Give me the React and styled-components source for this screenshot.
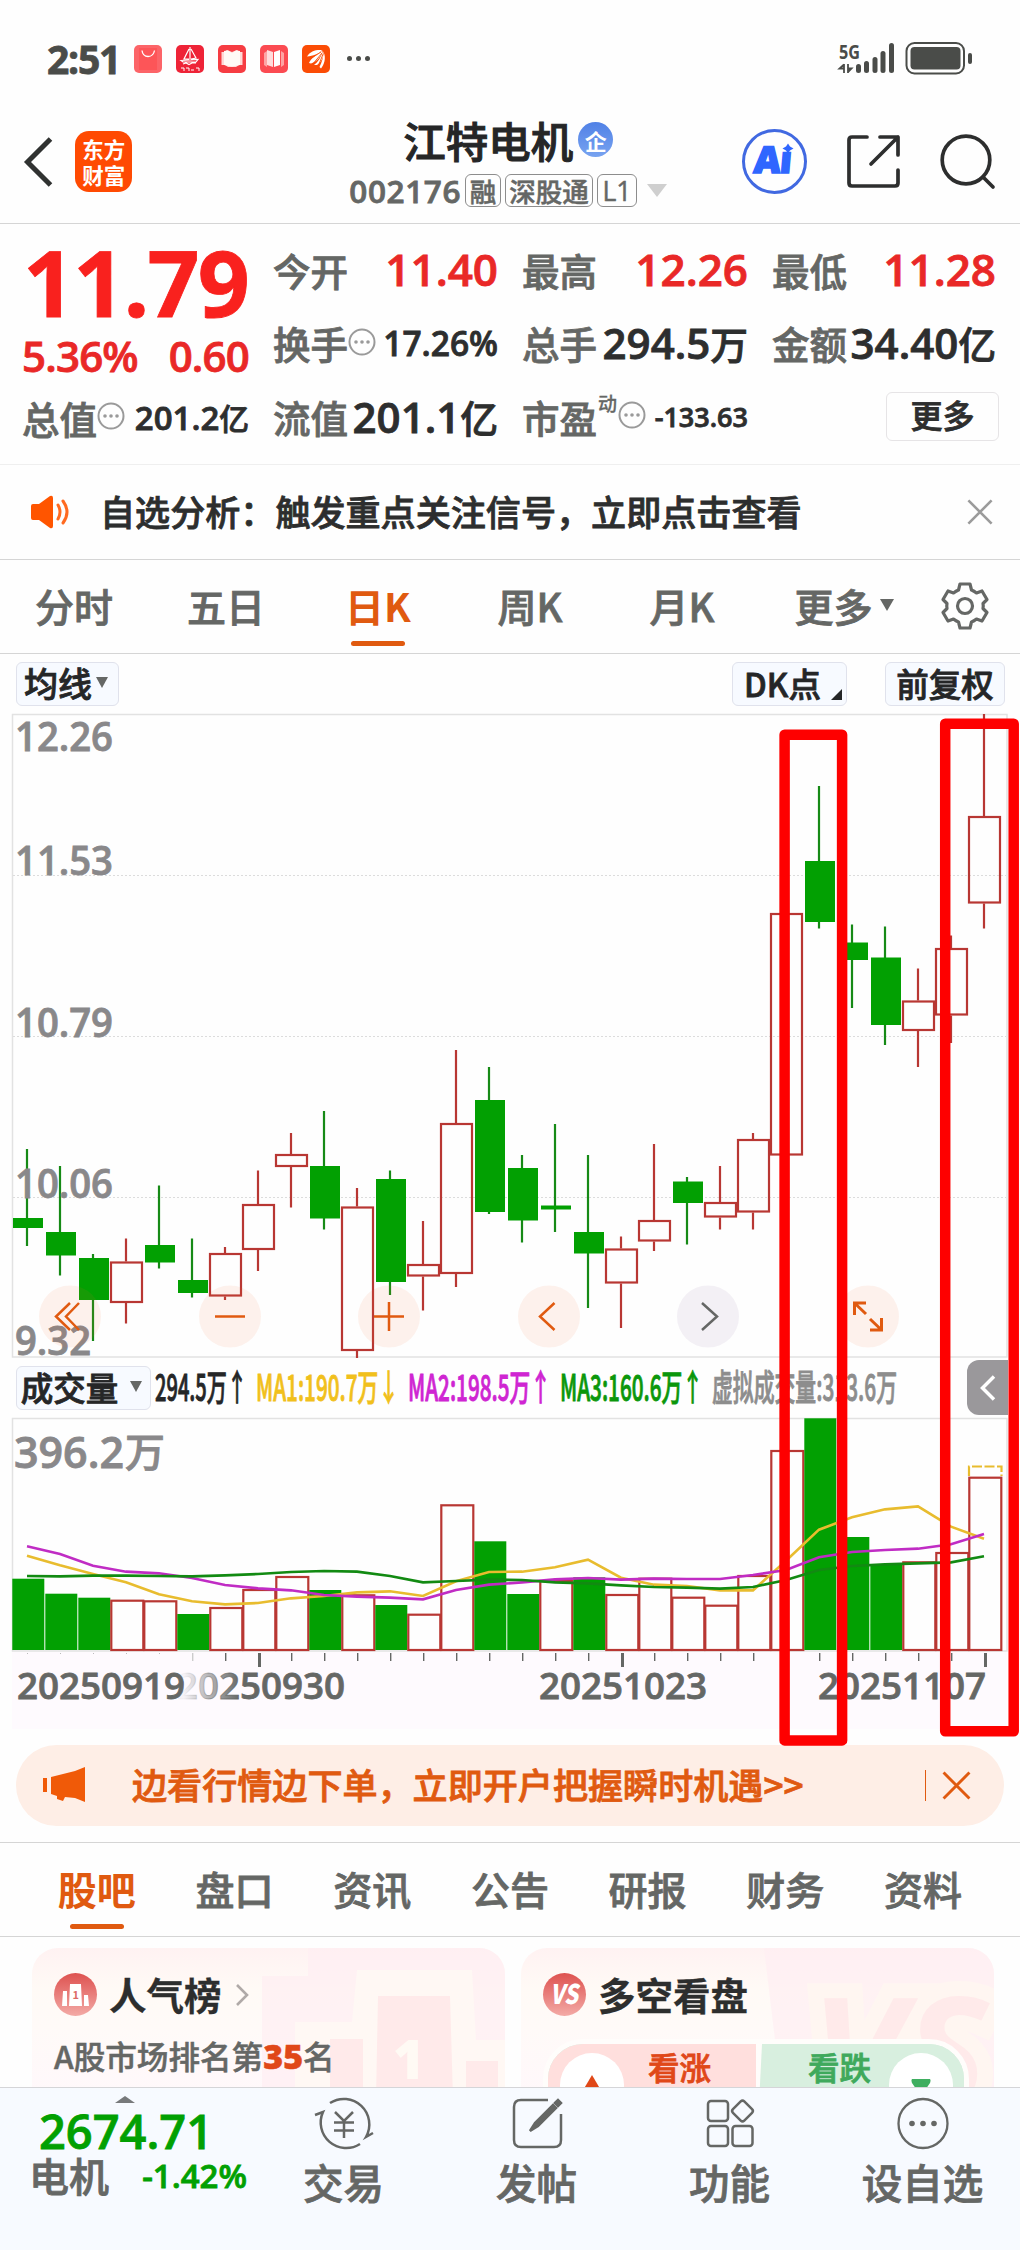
import React from 'react';
import styled, { createGlobalStyle } from 'styled-components';

const GlobalStyle = createGlobalStyle`
  * {
    box-sizing: border-box;
  }
  body {
    margin: 0;
    background: #fefefe;
    color: #2d2e2e;
    font-family: 'Open Sans', 'Noto Sans CJK SC', sans-serif;
    font-weight: 600;
    -webkit-text-stroke: 0.8px;
  }
  svg {
    display: block;
    flex: none;
    overflow: visible;
    -webkit-text-stroke: 0;
  }
`;

const RED = '#e92827';
const GREEN = '#02a002';
const ORANGE = '#e05a10';
const GREY = '#656765';
const UP = '#b83733';

const Page = styled.div`
  position: relative;
  display: flex;
  flex-direction: column;
  width: 1020px;
  height: 2250px;
  overflow: hidden;
  background: #fefefe;
`;

/* status bar */

const StatusBar = styled.div`
  display: flex;
  align-items: center;
  height: 92px;
  padding: 26px 47px 0;
  color: #4a4c49;
`;

const Clock = styled.div`
  width: 87px;
  font-size: 39px;
  font-weight: 700;
  letter-spacing: -1.2px;
  line-height: 40px;
`;

const AppIcons = styled.div`
  display: flex;
  gap: 14px;
`;

const Dots = styled.div`
  display: flex;
  gap: 4px;
  margin-left: 17px;
  i {
    width: 5px;
    height: 5px;
    border-radius: 50%;
    background: #4a4c49;
  }
`;

const Signal = styled.div`
  margin-left: auto;
`;

/* header */

const Header = styled.header`
  display: flex;
  align-items: center;
  height: 132px;
  padding: 0 24px;
  border-bottom: 1px solid #d5d5d5;
`;

const BackIcon = styled.svg`
  margin-top: 9px;
`;

const Logo = styled.div`
  display: flex;
  align-items: center;
  justify-content: center;
  width: 61px;
  height: 61px;
  margin-left: 23px;
  margin-top: 9px;
  border-radius: 14px;
  background: #ff4a02;
  color: #fff;
  font-family: 'Noto Sans CJK SC', sans-serif;
  font-size: 21.5px;
  font-weight: 700;
  line-height: 26px;
  text-align: center;
  -webkit-text-stroke: 0;
`;

const TitleBlock = styled.div`
  display: flex;
  flex-direction: column;
  width: 388px;
  margin-left: 217px;
  margin-top: 13px;
`;

const TitleRow = styled.div`
  display: flex;
  align-items: center;
  padding-left: 54px;
  height: 54px;
  font-family: 'Noto Sans CJK SC', sans-serif;
  font-size: 42.5px;
  font-weight: 500;
  color: #252627;
  -webkit-text-stroke: 1px;
`;

const Verified = styled.div`
  display: flex;
  align-items: center;
  justify-content: center;
  width: 35px;
  height: 35px;
  margin-left: 5px;
  border-radius: 50%;
  background: linear-gradient(#5081e6, #78a3f0);
  color: #fff;
  font-size: 22px;
  font-weight: 700;
  -webkit-text-stroke: 0;
`;

const CodeRow = styled.div`
  display: flex;
  align-items: center;
  height: 48px;
  color: ${GREY};
  font-size: 31.5px;
  letter-spacing: 0.6px;
`;

const Badge = styled.span`
  display: flex;
  align-items: center;
  justify-content: center;
  height: 33px;
  width: ${p => p.$w}px;
  margin-left: 4px;
  border: 1px solid #8d8d8d;
  border-radius: 6px;
  font-size: 26.5px;
  font-weight: 500;
  letter-spacing: 0;
  white-space: nowrap;
  -webkit-text-stroke: 0.5px;
`;

const HeaderIcons = styled.div`
  display: flex;
  align-items: center;
  gap: 40px;
  margin-left: 28px;
  margin-top: 9px;
`;

const Caret = styled.span`
  width: 0;
  height: 0;
  margin-left: ${p => p.$ml || 0}px;
  border-left: ${p => p.$w / 2}px solid transparent;
  border-right: ${p => p.$w / 2}px solid transparent;
  border-top: ${p => p.$h}px solid ${p => p.$color || GREY};
`;

/* quote */

const Quote = styled.section`
  display: flex;
  height: 242px;
  padding: 9px 24px 0 22px;
  border-bottom: 1px solid #efefef;
`;

const PriceColumn = styled.div`
  width: 251px;
  padding-right: 24px;
`;

const Price = styled.div`
  height: 97px;
  padding-left: 1px;
  color: #f9211e;
  font-size: 91px;
  font-weight: 700;
  line-height: 99px;
  letter-spacing: -1.8px;
`;

const Change = styled.div`
  display: flex;
  justify-content: space-between;
  align-items: center;
  height: 51px;
  color: ${RED};
  font-size: 42px;
  letter-spacing: -0.8px;
`;

const Stats = styled.div`
  display: grid;
  grid-template-columns: 225px 226px 224px;
  grid-auto-rows: 73.5px;
  column-gap: 24px;
  flex: 1;
`;

const Stat = styled.div`
  display: flex;
  align-items: center;
  height: 73.5px;
  white-space: nowrap;
`;

const StatLabel = styled.span`
  color: ${GREY};
  font-family: 'Noto Sans CJK SC', sans-serif;
  font-size: 37.5px;
  font-weight: 500;
  sup {
    display: inline-block;
    width: 20px;
    margin-left: 1px;
    font-size: 19px;
    line-height: 0;
    vertical-align: 22px;
    -webkit-text-stroke: 0.3px;
  }
`;

const StatValue = styled.span`
  margin-left: auto;
  font-size: ${p => p.$size || 42}px;
  color: ${p => p.$color || '#2d2e2e'};
`;

const Unit = styled.span`
  font-family: 'Noto Sans CJK SC', sans-serif;
  font-weight: 500;
  font-size: 0.9em;
`;

const MoreButton = styled.button`
  width: 113px;
  height: 49px;
  margin: 0 -3px 0 auto;
  padding: 0 0 4px;
  border: 1px solid #e6e4e6;
  border-radius: 6px;
  background: #fefefe;
  color: #2d2e2e;
  font-family: 'Noto Sans CJK SC', sans-serif;
  font-size: 32px;
  font-weight: 500;
  line-height: 40px;
  -webkit-text-stroke: 0.8px;
`;

/* notice + tabs */

const Notice = styled.section`
  display: flex;
  align-items: center;
  height: 95px;
  padding: 0 27px 0 30px;
  border-bottom: 1px solid #d5d5d5;
`;

const NoticeText = styled.div`
  flex: 1;
  margin-left: 29px;
  margin-top: -4px;
  color: #2d2e2e;
  font-family: 'Noto Sans CJK SC', sans-serif;
  font-size: 35.1px;
  font-weight: 500;
  white-space: nowrap;
`;

const PeriodTabs = styled.nav`
  display: flex;
  height: 94px;
  border-bottom: 1px solid #d5d5d5;
`;

const Tab = styled.div`
  position: relative;
  display: flex;
  align-items: center;
  justify-content: center;
  width: ${p => p.$w || 152}px;
  height: 100%;
  padding: 0 ${p => (p.$w ? 0 : 4)}px 3px 0;
  color: ${p => (p.$active ? ORANGE : GREY)};
  font-family: 'Noto Sans CJK SC', sans-serif;
  font-size: 39px;
  font-weight: ${p => (p.$active ? 700 : 500)};
  -webkit-text-stroke: ${p => (p.$active ? 0 : 0.8)}px;
  &::after {
    content: '';
    display: ${p => (p.$active ? 'block' : 'none')};
    position: absolute;
    bottom: 7px;
    width: 54px;
    height: 5px;
    border-radius: 3px;
    background: ${ORANGE};
  }
`;

const GearIcon = styled.svg`
  margin: 21px 0 0 12px;
`;

const Toolbar = styled.div`
  display: flex;
  align-items: center;
  height: 60px;
  padding: 0 15px 0 16px;
`;

const Chip = styled.div`
  position: relative;
  display: flex;
  align-items: center;
  justify-content: center;
  width: ${p => p.$w}px;
  height: 44px;
  margin-left: ${p => p.$ml || 0};
  padding: 0 ${p => p.$pr || 0}px 2px 0;
  border: 1px solid #e0e2ec;
  border-radius: 6px;
  background: #f7faff;
  color: #252627;
  font-family: 'Noto Sans CJK SC', sans-serif;
  font-size: ${p => p.$size || 32.5}px;
  font-weight: 500;
  white-space: nowrap;
`;

const Corner = styled.span`
  position: absolute;
  right: 4px;
  bottom: 5px;
  border-left: 11px solid transparent;
  border-bottom: 11px solid #252627;
`;

const VolumeHeader = styled.div`
  display: flex;
  align-items: center;
  height: 60px;
  padding-left: 16px;
`;

const Handle = styled.div`
  display: flex;
  align-items: center;
  justify-content: center;
  width: 41px;
  height: 55px;
  margin-left: 59px;
  border-radius: 12px 0 0 12px;
  background: #9a989b;
`;

/* drawn over both charts and the row between them */
const Marks = styled.svg`
  position: absolute;
  left: 0;
  top: 714px;
  pointer-events: none;
`;

/* banner */

const Banner = styled.div`
  display: flex;
  align-items: center;
  height: 81px;
  margin: 16px 16px;
  padding: 0 33px 0 27px;
  border-radius: 41px;
  background: #feeee6;
  color: ${ORANGE};
`;

const BannerText = styled.div`
  flex: 1;
  margin-left: 46px;
  margin-top: -4px;
  font-family: 'Noto Sans CJK SC', sans-serif;
  font-size: 35.1px;
  font-weight: 500;
  white-space: nowrap;
`;

const BannerRule = styled.span`
  width: 1px;
  height: 31px;
  margin-right: 16px;
  background: ${ORANGE};
`;

const InfoTabs = styled.nav`
  display: flex;
  height: 95px;
  padding: 0 28px;
  border-top: 1px solid #d5d5d5;
  border-bottom: 1px solid #d5d5d5;
`;

/* cards */

const Cards = styled.section`
  display: flex;
  gap: 16px;
  height: 151px;
  padding: 11px 26px 0 32px;
  overflow: hidden;
`;

const Card = styled.div`
  position: relative;
  width: 473px;
  height: 180px;
  padding: 24px 22px;
  border-radius: 26px;
  overflow: hidden;
  background: linear-gradient(#fff2f2 0, #fffaf6 40px, #fffaf8 80px, #fff8fb 150px);
`;

const Watermark = styled.svg`
  position: absolute;
  right: 0;
  top: 0;
`;

const CardTitle = styled.div`
  position: relative;
  display: flex;
  align-items: center;
  height: 46px;
  color: #2d2e2e;
  font-family: 'Noto Sans CJK SC', sans-serif;
  font-size: 37.5px;
  font-weight: 700;
  -webkit-text-stroke: 0.3px;
  svg:first-child {
    margin-right: 12px;
  }
  span {
    margin-top: -3px;
    margin-right: 13px;
  }
`;

const CardText = styled.div`
  position: relative;
  margin-top: 16px;
  color: ${GREY};
  font-family: 'Noto Sans CJK SC', sans-serif;
  font-size: 31.6px;
  font-weight: 500;
  line-height: 42px;
  -webkit-text-stroke: 0.5px;
  b {
    color: #e04818;
    font-family: 'Open Sans', sans-serif;
    font-size: 34px;
    font-weight: 800;
  }
`;

const VoteBar = styled.div`
  position: relative;
  display: flex;
  width: 426px;
  height: 90px;
  margin: 21px 0 0 0;
  border: 5px solid #fffdfb;
  border-radius: 40px;
  overflow: hidden;
  background: #d8efdf;
`;

const VoteSide = styled.div`
  display: flex;
  justify-content: space-between;
  width: ${p => p.$w}px;
  padding: ${p => p.$pad};
  background: ${p => p.$bg};
  color: ${p => p.$color};
  font-family: 'Noto Sans CJK SC', sans-serif;
  font-size: 31.5px;
  font-weight: 500;
  line-height: 44px;
`;

const VoteDot = styled.div`
  display: flex;
  justify-content: center;
  width: 64px;
  height: 64px;
  margin-top: 9px;
  padding-top: ${p => p.$pt}px;
  border-radius: 50%;
  background: #fff;
`;

/* bottom bar */

const BottomBar = styled.footer`
  display: flex;
  height: 163px;
  border-top: 1px solid #d5d5d8;
  background: #f7faff;
`;

const IndexBox = styled.div`
  width: 247px;
  padding: 8px 0 0 29px;
`;

const UpArrow = styled.svg`
  margin-left: 86px;
`;

const IndexValue = styled.div`
  padding: 3px 0 0 10px;
  color: ${GREEN};
  font-size: 47px;
  line-height: 50px;
`;

const IndexRow = styled.div`
  display: flex;
  align-items: center;
  justify-content: space-between;
  height: 38px;
  color: ${GREY};
  font-family: 'Noto Sans CJK SC', sans-serif;
  font-size: 40px;
  font-weight: 500;
  em {
    color: ${GREEN};
    font-family: 'Open Sans', sans-serif;
    font-size: 33px;
    font-style: normal;
    font-weight: 600;
  }
`;

const NavItem = styled.div`
  display: flex;
  flex-direction: column;
  align-items: center;
  width: 193px;
  padding-top: 7px;
  color: ${GREY};
  font-family: 'Noto Sans CJK SC', sans-serif;
  font-size: 40.5px;
  font-weight: 500;
  line-height: 62px;
`;

// [type, wick top, wick bottom, body top, body bottom, volume top, volume type]
const DAYS = [
  ['d', 1149, 1246, 1218, 1228, 1578.7],
  ['d', 1166, 1275.5, 1232, 1255.5, 1593.7],
  ['d', 1254, 1341, 1258, 1300, 1597.7],
  ['u', 1238.5, 1323.5, 1261.5, 1303, 1599.7],
  ['d', 1185.5, 1268.5, 1245, 1262.5, 1600.3, 'u'],
  ['d', 1238.5, 1297.5, 1280, 1293, 1614],
  ['u', 1247, 1300, 1253, 1296.5, 1607],
  ['u', 1170.5, 1271, 1204, 1250, 1589],
  ['u', 1133, 1207.5, 1154, 1167, 1576],
  ['d', 1111, 1229.5, 1166, 1218.5, 1590],
  ['u', 1188, 1358, 1206.5, 1351, 1594.3],
  ['d', 1170.5, 1295, 1179, 1282, 1605],
  ['u', 1221, 1310.5, 1264, 1276.5, 1613.7],
  ['u', 1050, 1287, 1123, 1274, 1504.3],
  ['d', 1067, 1214, 1100, 1212, 1541.3],
  ['d', 1155, 1242.5, 1168, 1220.5, 1594],
  ['d', 1124, 1232, 1205.5, 1209.5, 1580, 'u'],
  ['d', 1155, 1308, 1232, 1253.5, 1577.3],
  ['u', 1236.5, 1328, 1248.5, 1283.5, 1594],
  ['u', 1144, 1251, 1220, 1241.5, 1577.7],
  ['d', 1177, 1244.5, 1181.5, 1203, 1596.7, 'u'],
  ['u', 1166, 1229.5, 1202, 1217.5, 1604.7],
  ['u', 1133, 1229.5, 1139, 1212.5, 1575],
  ['u', 913, 1155, 913, 1155.5, 1450],
  ['d', 786, 928.5, 861, 922, 1418.3],
  ['d', 924.5, 1008, 942.5, 960, 1537],
  ['d', 926.5, 1045, 957.5, 1025, 1564.3],
  ['u', 968.5, 1067, 1000.5, 1031, 1561.3],
  ['u', 935.5, 1043, 948, 1015.5, 1552],
  ['u', 714, 928.5, 816, 903.5, 1476.7],
];

// moving averages, in thirds of a pixel from y = 1350
const MA = [
  ['#e8bc2e', [617, 646, 672, 697, 733, 754, 763, 759, 745, 738, 727, 724, 738, 694, 666, 665, 652, 629, 683, 704, 708, 721, 721, 632, 539, 502, 478, 469, 530, 566]],
  ['#c02cc4', [589, 612, 647, 665, 670, 684, 705, 715, 721, 735, 740, 743, 748, 720, 704, 697, 688, 684, 689, 686, 687, 687, 675, 660, 622, 606, 600, 596, 583, 552]],
  ['#128a12', [678, 679, 677, 677, 678, 679, 676, 672, 666, 663, 665, 678, 697, 693, 689, 690, 697, 700, 706, 711, 713, 716, 711, 690, 660, 648, 643, 640, 637, 619]],
];

const PRICES = [
  ['12.26', 751],
  ['11.53', 875],
  ['10.79', 1036.5],
  ['10.06', 1197.5],
  ['9.32', 1354.5],
];

const LEGEND = [
  ['294.5万↑', 155, 92, '#252627'],
  ['MA1:190.7万↓', 256, 143, '#f1c01c'],
  ['MA2:198.5万↑', 408, 143, '#cf25d2'],
  ['MA3:160.6万↑', 560, 143, '#0b970b'],
  ['虚拟成交量:313.6万', 712, 185, '#8d8d8d'],
];

const DATES = [
  ['20250919', 17],
  ['20250930', 177],
  ['20251023', 539],
  ['20251107', 818],
];

const BUTTONS = [70, 230, 389, 549, 708, 868];

const cx = i => 27 + 33 * i;

const Candle = ({ day, i }) => {
  const [type, hi, lo, top, bottom] = day;
  const x = cx(i);
  if (type === 'd') {
    return (
      <g fill={GREEN}>
        <rect x={x - 1.1} y={hi} width="2.2" height={lo - hi} fill="#168a16" />
        <rect x={x - 14} y={top} width="30" height={bottom - top} />
      </g>
    );
  }
  return (
    <g stroke={UP} strokeWidth="2.2" fill="none">
      <path d={`M${x} ${hi}V${top}M${x} ${bottom}V${lo}`} />
      <rect x={x - 15} y={top + 1} width="31" height={bottom - top - 2} />
    </g>
  );
};

const PriceChart = () => (
  <svg width="1020" height="644" viewBox="0 714 1020 644">
    <path d="M12.5 714.5H1007V1357H12.5Z" fill="none" stroke="#e2e2e2" strokeWidth="1.5" />
    <path d="M13 875.5H1006M13 1036.5H1006M13 1197.5H1006" stroke="#dcdcdc" strokeDasharray="2 2" />
    {DAYS.map((d, i) => <Candle key={i} day={d} i={i} />)}
    <g fill="#89888a" stroke="#89888a" strokeWidth="0.8" fontSize="39" fontWeight="600">
      {PRICES.map(([t, y]) => (
        <text key={t} x="15" y={y} textLength={t.length === 5 ? 98 : 76} lengthAdjust="spacingAndGlyphs">{t}</text>
      ))}
    </g>
    {BUTTONS.map(x => (
      <circle key={x} cx={x} cy="1316.5" r="31" fill={x === 708 ? '#8868a0' : '#f56a32'} fillOpacity="0.09" />
    ))}
    <g fill="none" stroke={ORANGE} strokeWidth="2.5">
      <path d="M70 1303L56 1316.5L70 1330M79 1303L66 1316.5L79 1330" />
      <path d="M215 1316.5H245" />
      <path d="M374 1316.5H404M389 1302V1331" />
      <path d="M554.5 1303L540 1316.5L554.5 1330" />
      <path d="M702 1303L717 1316.5L702 1330" stroke={GREY} />
      <path d="M866 1303H854.5V1315M855 1303.5L866 1314M870 1330H881.5V1318M881 1329.5L870 1319" strokeWidth="3" />
    </g>
  </svg>
);

const VolumeChart = () => (
  <svg width="1020" height="311" viewBox="0 1418 1020 311">
    <defs>
      <linearGradient id="fade" gradientUnits="userSpaceOnUse" x1="184" x2="240" y1="0" y2="0">
        <stop offset="0" stopColor={GREY} stopOpacity="0.05" />
        <stop offset="1" stopColor={GREY} />
      </linearGradient>
    </defs>
    <rect x="12" y="1652" width="995" height="77" fill="#fefafe" />
    <path d="M12.5 1418.5H1007V1651H12.5Z" fill="none" stroke="#e2e2e2" strokeWidth="1.5" />
    <g fill="#89888a" stroke="#89888a" strokeWidth="0.8">
      <text x="14" y="1468" fontSize="43" fontWeight="600" textLength="110" lengthAdjust="spacingAndGlyphs">396.2</text>
      <text x="125" y="1467" fontSize="40" fontWeight="500" fontFamily="Noto Sans CJK SC">万</text>
    </g>
    {DAYS.map((d, i) => ((d[6] || d[0]) === 'd'
      ? <rect key={i} x={12.3 + 33 * i} y={d[5]} width="32" height={1650 - d[5]} fill={GREEN} />
      : <rect key={i} x={12.3 + 33 * i} y={d[5] + 1} width="32" height={1649 - d[5]} fill="#fefefe" stroke={UP} strokeWidth="2.2" />
    ))}
    <path d="M969 1476V1466.500H1001.500V1476" fill="none" stroke="#e8bc2e" strokeWidth="2.2" strokeDasharray="10 2.500" />
    {MA.map(([color, ys]) => (
      <polyline
        key={color}
        points={ys.map((y, i) => `${cx(i)},${1350 + y / 3}`).join(' ')}
        fill="none"
        stroke={color}
        strokeWidth="2.6"
      />
    ))}
    {DAYS.map((d, i) => {
      const major = i === 7 || i === 18 || i === 29;
      if (i < 5) return <rect key={i} x={cx(i)} y="1653" width="1" height="1" fill="#bbb" />;
      return (
        <rect key={i} x={cx(i)} y="1653" width={major ? 3 : 1.4} height={major ? 14 : 8} fill={i === 5 ? '#ccc' : GREY} />
      );
    })}
    <g strokeWidth="0.8" fontSize="36.5" fontWeight="600">
      {DATES.map(([t, x], i) => {
        const paint = i === 1 ? 'url(#fade)' : GREY;
        return (
          <text key={t} x={x} y="1698.5" textLength="168" lengthAdjust="spacingAndGlyphs" fill={paint} stroke={paint}>{t}</text>
        );
      })}
    </g>
  </svg>
);

const MoreDots = () => (
  <svg width="28" height="28" viewBox="0 0 28 28" fill="#9a9a9a">
    <circle cx="14" cy="13" r="12.5" fill="none" stroke="#9a9a9a" strokeWidth="2" />
    <circle cx="8" cy="13" r="1.8" />
    <circle cx="14" cy="13" r="1.8" />
    <circle cx="20" cy="13" r="1.8" />
  </svg>
);

const Close = ({ size, color }) => (
  <svg width={size} height={size} viewBox="0 0 28 28" stroke={color} strokeWidth="2.8">
    <path d="M1.5 1.5L26.5 26.5M26.5 1.5L1.5 26.5" />
  </svg>
);

const StatusIcons = () => (
  <AppIcons>
    <svg width="28" height="28" viewBox="0 0 28 28">
      <rect width="28" height="28" rx="5" fill="#fc6468" />
      <rect x="5" y="3" width="18" height="22" fill="#fd5558" />
      <path d="M8 5.5C9 13.5 19 13.5 20.5 5.5" fill="none" stroke="#fff" strokeWidth="1.3" />
    </svg>
    <svg width="28" height="28" viewBox="0 0 28 28">
      <rect width="28" height="28" rx="5" fill="#ee2337" />
      <g fill="none" stroke="#fff" strokeWidth="1.2">
        <path d="M14 2V14M13 4L8 14H13M15 4L20 13L15 14M5 15.5L22 14.5L20 17H7ZM7 19L10 18L13 19.5L16 18L20 18" />
        <path d="M5 23H8V26M10 23H13V26M15 25H18M20 23H23V26" strokeWidth="1" />
      </g>
    </svg>
    <svg width="28" height="28" viewBox="0 0 28 28">
      <rect width="28" height="28" rx="5" fill="#f63c42" />
      <path d="M3.500 7H6L9 5L14 7L19 5L22 7H24.500V20H21L18 22H10L7 20H3.500Z" fill="#ffd9d6" />
      <path d="M6 6L10 5.500L14 8L18 5.500L22 6V20L14 21.500L6 20Z" fill="#fffaf5" />
    </svg>
    <svg width="28" height="28" viewBox="0 0 28 28">
      <rect width="28" height="28" rx="5" fill="#fb4b52" />
      <path d="M4 8L7 6V22L4 20ZM24 8L21 6V22L24 20Z" fill="#fda4a4" />
      <path d="M7 5L13 7V22L7 20Z" fill="#ffdcdc" />
      <path d="M14 7L20 5V20L14 22Z" fill="#fff" />
    </svg>
    <svg width="28" height="28" viewBox="0 0 28 28">
      <rect width="28" height="28" rx="5" fill="#fb4c05" />
      <g fill="#fff">
        <path d="M5 11.5C8 6 14 4.500 20 5C17 9 11 11 5 11.500Z" />
        <path d="M7 18C9 13 15 9.500 20.500 5.500C19.500 12 14 17 9 18.500Z" />
        <path d="M12 20C16 17 19 12 21 6C22.500 12 18.500 18 15 20Z" />
        <path d="M17.500 22C20 17 21.500 12 21.500 7C24.500 13 22 20 19 23.500Z" />
      </g>
      <path d="M6.500 15L19 7M10 20L20 8M16 21.500L21.300 8.500" stroke="#fb4c05" strokeWidth="0.900" />
    </svg>
  </AppIcons>
);

const SignalIcons = () => (
  <svg width="134" height="34" viewBox="0 0 134 34" fill="#4a4c49">
    <text x="0" y="16.500" fontSize="20" fontWeight="700" textLength="21" lengthAdjust="spacingAndGlyphs">5G</text>
    <path d="M5 22V31M5 22.500L0.500 26.500H5M9 22V31M9 30L12.500 26.500H9" fill="none" stroke="#4a4c49" strokeWidth="1.800" />
    <rect x="17" y="22" width="5" height="9" rx="2.500" />
    <rect x="25" y="19" width="5" height="12" rx="2.500" />
    <rect x="33.500" y="15" width="5" height="16" rx="2.500" />
    <rect x="41.500" y="9" width="5" height="22" rx="2.500" />
    <rect x="50" y="1" width="5" height="30" rx="2.500" />
    <rect x="67.500" y="1" width="57.500" height="30.500" rx="8" fill="none" stroke="#4a4c49" strokeWidth="2" />
    <rect x="71.500" y="5" width="50" height="22.500" rx="4" />
    <rect x="129" y="11" width="4" height="11" rx="2" />
  </svg>
);

const App = () => (
  <Page>
    <GlobalStyle />
    <StatusBar>
      <Clock>2:51</Clock>
      <StatusIcons />
      <Dots><i /><i /><i /></Dots>
      <Signal><SignalIcons /></Signal>
    </StatusBar>

    <Header>
      <BackIcon width="28" height="50" viewBox="0 0 28 50" fill="none" stroke="#303231" strokeWidth="5">
        <path d="M26.500 2L3.500 25L26.500 48" />
      </BackIcon>
      <Logo>东方<br />财富</Logo>
      <TitleBlock>
        <TitleRow>
          江特电机
          <Verified>企</Verified>
        </TitleRow>
        <CodeRow>
          002176
          <Badge $w={36}>融</Badge>
          <Badge $w={88}>深股通</Badge>
          <Badge $w={40}>L1</Badge>
          <Caret $w={20} $h={13} $ml={10} $color="#cfcfcf" />
        </CodeRow>
      </TitleBlock>
      <HeaderIcons>
        <svg width="65" height="65" viewBox="0 0 65 65">
          <circle cx="32.500" cy="32.500" r="31" fill="none" stroke="#4169e1" strokeWidth="3" />
          <g transform="skewX(-5)">
            <text x="15" y="44.500" fill="#2f66ff" fontSize="37" fontWeight="800" textLength="38" stroke="#2f66ff" strokeWidth="1.500">Aı</text>
          </g>
          <path d="M46 14.500L48 17.500L51.500 19.500L48 21.500L46 24.500L44 21.500L40.500 19.500L44 17.500Z" fill="#2f66ff" />
        </svg>
        <svg width="53" height="54" viewBox="0 0 53 54" fill="none" stroke="#2d2e2e" strokeWidth="3.700" strokeLinecap="round" strokeLinejoin="round">
          <path d="M20 2H5Q2 2 2 5V48Q2 51 5 51H48Q51 51 51 48V35M33 2H51V20M51 2L24 29" />
        </svg>
        <svg width="56" height="56" viewBox="0 0 56 56" fill="none" stroke="#2d2e2e" strokeWidth="3.700" strokeLinecap="round">
          <circle cx="26" cy="26" r="23.800" />
          <path d="M43 43L53 53" />
        </svg>
      </HeaderIcons>
    </Header>

    <Quote>
      <PriceColumn>
        <Price>11.79</Price>
        <Change><span>5.36%</span><span>0.60</span></Change>
        <Stat>
          <StatLabel>总值</StatLabel>
          <MoreDots />
          <StatValue $size={33}>201.2<Unit>亿</Unit></StatValue>
        </Stat>
      </PriceColumn>
      <Stats>
        <Stat><StatLabel>今开</StatLabel><StatValue $size={44} $color={RED}>11.40</StatValue></Stat>
        <Stat><StatLabel>最高</StatLabel><StatValue $size={44} $color={RED}>12.26</StatValue></Stat>
        <Stat><StatLabel>最低</StatLabel><StatValue $size={44} $color={RED}>11.28</StatValue></Stat>
        <Stat><StatLabel>换手</StatLabel><MoreDots /><StatValue $size={33.5}>17.26%</StatValue></Stat>
        <Stat><StatLabel>总手</StatLabel><StatValue>294.5<Unit>万</Unit></StatValue></Stat>
        <Stat><StatLabel>金额</StatLabel><StatValue>34.40<Unit>亿</Unit></StatValue></Stat>
        <Stat><StatLabel>流值</StatLabel><StatValue>201.1<Unit>亿</Unit></StatValue></Stat>
        <Stat>
          <StatLabel>市盈<sup>动</sup></StatLabel>
          <MoreDots />
          <StatValue $size={27}>-133.63</StatValue>
        </Stat>
        <Stat><MoreButton>更多</MoreButton></Stat>
      </Stats>
    </Quote>

    <Notice>
      <svg width="41" height="34" viewBox="0 0 41 34">
        <path d="M3 9H9L20 1Q23 0 23 3V31Q23 34 20 33L9 25H3Q1 25 1 23V11Q1 9 3 9Z" fill="#ff5500" />
        <path d="M28 10Q32 17 28 24M33 6Q41 17 33 28" fill="none" stroke="#ff6a20" strokeWidth="3" strokeLinecap="round" />
      </svg>
      <NoticeText>自选分析：触发重点关注信号，立即点击查看</NoticeText>
      <Close size={26} color="#9b9b9b" />
    </Notice>

    <PeriodTabs>
      <Tab>分时</Tab>
      <Tab>五日</Tab>
      <Tab $active>日K</Tab>
      <Tab>周K</Tab>
      <Tab>月K</Tab>
      <Tab $w={168}>更多<Caret $w={14} $h={12} $ml={7} /></Tab>
      <GearIcon width="50" height="50" viewBox="0 0 50 50" fill="none" stroke={GREY} strokeWidth="3.200" strokeLinejoin="round">
        <path d="M20 3H30L31.500 9Q34 10 36.500 12L42 10L47 18.500L43 22.500Q43.500 25 43 27.500L47 31.500L42 40L36.500 38Q34 40 31.500 41L30 47H20L18.500 41Q16 40 13.500 38L8 40L3 31.500L7 27.500Q6.500 25 7 22.500L3 18.500L8 10L13.500 12Q16 10 18.500 9Z" />
        <circle cx="25" cy="25" r="7.500" />
      </GearIcon>
    </PeriodTabs>

    <Toolbar>
      <Chip $w={103} $size={34} $pr={3}>均线<Caret $w={13} $h={11} $ml={4} /></Chip>
      <Chip $w={115} $ml="auto" $pr={14}>DK点<Corner /></Chip>
      <Chip $w={120} $ml="38px">前复权</Chip>
    </Toolbar>
    <PriceChart />
    <VolumeHeader>
      <Chip $w={135} $size={32.5} $pr={4}>成交量<Caret $w={13} $h={11} $ml={12} /></Chip>
      <svg width="757" height="60" viewBox="151 1358 757 60">
        {LEGEND.map(([t, x, w, color]) => (
          <text
            key={t}
            x={x}
            y="1401"
            fill={color}
            stroke={color}
            strokeWidth="0.9"
            fontFamily="Noto Sans CJK SC"
            fontSize="36"
            fontWeight="500"
            textLength={w}
            lengthAdjust="spacingAndGlyphs"
          >
            {t}
          </text>
        ))}
      </svg>
      <Handle>
        <svg width="16" height="26" viewBox="0 0 16 26" fill="none" stroke="#fff" strokeWidth="3.500">
          <path d="M14 1.500L2.500 13L14 24.500" />
        </svg>
      </Handle>
    </VolumeHeader>
    <VolumeChart />

    <Banner>
      <svg width="43" height="36" viewBox="0 0 43 36" fill="#f05a08">
        <path d="M8 10L32 4L42 0V35L32 31L22 30L20 34L14 32V29L8 27Z" />
        <rect x="0" y="11" width="4" height="14" />
      </svg>
      <BannerText>边看行情边下单，立即开户把握瞬时机遇&gt;&gt;</BannerText>
      <BannerRule />
      <Close size={29} color={ORANGE} />
    </Banner>

    <InfoTabs>
      {['股吧', '盘口', '资讯', '公告', '研报', '财务', '资料'].map((t, i) => (
        <Tab key={t} $w={137.7} $active={i === 0}>{t}</Tab>
      ))}
    </InfoTabs>

    <Cards>
      <Card>
        <Watermark width="243" height="150" viewBox="262 1948 243 150">
          <path d="M308 1948H505V2098H262V1976H308Z" fill="#ffeef2" fillOpacity="0.700" />
          <path d="M295 2098V2022H352L357 1970H472L476 2040H505V2098Z" fill="#fff8f4" />
          <path d="M330 2098V2039H363V2098ZM376 2098L378 1996H450L453 2098ZM466 2098V2061H498V2098Z" fill="#ffeaea" />
          <text x="393" y="2079" fontSize="54" fontWeight="800" fill="#fffaf4">1</text>
        </Watermark>
        <CardTitle>
          <svg width="43" height="43" viewBox="0 0 43 43">
            <defs>
              <linearGradient id="badge" x1="0" x2="0" y1="0" y2="1">
                <stop offset="0" stopColor="#de5250" />
                <stop offset="1" stopColor="#f3aaa6" />
              </linearGradient>
            </defs>
            <circle cx="21.500" cy="21.500" r="21.500" fill="url(#badge)" />
            <path d="M9 18H13V33H8ZM16 11H27L28 33H15ZM30 22H34L35 33H30Z" fill="#fff" />
            <text x="18.500" y="26" fontSize="11" fontWeight="700" fill="#dd6a66">1</text>
          </svg>
          <span>人气榜</span>
          <svg width="14" height="22" viewBox="0 0 14 22" fill="none" stroke="#b0aaa8" strokeWidth="2.600">
            <path d="M2 1L12 11L2 21" />
          </svg>
        </CardTitle>
        <CardText>A股市场排名第<b>35</b>名</CardText>
      </Card>
      <Card>
        <Watermark width="230" height="150" viewBox="764 1948 230 150">
          <path d="M764 1948H994V2098H782Z" fill="#ffeef2" fillOpacity="0.700" />
          <text x="810" y="2106" fontSize="150" fontWeight="700" fontStyle="italic" fill="#ffeaea" stroke="#fff6f1" strokeWidth="30" paintOrder="stroke" textLength="178" lengthAdjust="spacingAndGlyphs">VS</text>
        </Watermark>
        <CardTitle>
          <svg width="43" height="43" viewBox="0 0 43 43">
            <circle cx="21.500" cy="21.500" r="21.500" fill="url(#badge)" />
            <text x="7" y="31" fontSize="27" fontWeight="800" fontStyle="italic" fill="#fff" textLength="28" lengthAdjust="spacingAndGlyphs">VS</text>
          </svg>
          <span>多空看盘</span>
        </CardTitle>
        <VoteBar>
          <VoteSide $w={208} $bg="#ffdfdd" $color="#e04818" $pad="0 45px 0 12px">
            <VoteDot $pt={21}>
              <svg width="22" height="20" viewBox="0 0 22 20"><path d="M11 1L21 18H1Z" fill="#e04818" /></svg>
            </VoteDot>
            看涨
          </VoteSide>
          <svg width="6" height="80" viewBox="0 0 6 80">
            <path d="M0 0H6L2 80H0Z" fill="#fffdfb" />
          </svg>
          <VoteSide $w={202} $bg="#d8efdf" $color="#3fa95c" $pad="0 11px 0 46px">
            看跌
            <VoteDot $pt={26}>
              <svg width="20" height="18" viewBox="0 0 20 18"><path d="M1 0H19Q20 1 19 4L10 17L1 4Q0 1 1 0Z" fill="#3fae60" /></svg>
            </VoteDot>
          </VoteSide>
        </VoteBar>
      </Card>
    </Cards>

    <BottomBar>
      <IndexBox>
        <UpArrow width="20" height="7" viewBox="0 0 20 7"><path d="M10 0L20 7H0Z" fill="#77797b" /></UpArrow>
        <IndexValue>2674.71</IndexValue>
        <IndexRow>电机<em>-1.42%</em></IndexRow>
      </IndexBox>
      <NavItem>
        <svg width="60" height="56" viewBox="0 0 60 56" fill="none" stroke={GREY} strokeWidth="2.500">
          <path d="M16 8A25.500 25.500 0 0 1 52 42L59 38M1 20L9 17A25.500 25.500 0 0 0 46 49" />
          <path d="M21 17L30 26L39 17M20 27.500H40M20 35.500H40M30 26V43" />
        </svg>
        交易
      </NavItem>
      <NavItem>
        <svg width="50" height="56" viewBox="0 0 50 56" fill="none" stroke={GREY} strokeWidth="2.500">
          <path d="M36 5H9Q2 5 2 12V45Q2 52 9 52H42Q49 52 49 45V19" />
          <path d="M18 36L23 28L41 10L44 13L26 31ZM43 8L46 5L49 8L46 11Z" fill={GREY} />
        </svg>
        发帖
      </NavItem>
      <NavItem>
        <svg width="48" height="56" viewBox="0 0 48 56" fill="none" stroke={GREY} strokeWidth="2.500">
          <rect x="2" y="6" width="20" height="20" rx="3" />
          <rect x="2" y="31" width="20" height="20" rx="3" />
          <rect x="26.500" y="31" width="20" height="20" rx="3" />
          <rect x="28.500" y="8" width="16" height="16" rx="2.500" transform="rotate(45 36.500 16)" />
        </svg>
        功能
      </NavItem>
      <NavItem>
        <svg width="52" height="56" viewBox="0 0 52 56" fill={GREY}>
          <circle cx="26" cy="28.500" r="24.500" fill="none" stroke={GREY} strokeWidth="2.300" />
          <circle cx="15" cy="28.500" r="2.800" />
          <circle cx="26" cy="28.500" r="2.800" />
          <circle cx="37" cy="28.500" r="2.800" />
        </svg>
        设自选
      </NavItem>
    </BottomBar>

    <Marks width="1020" height="1034" viewBox="0 714 1020 1034" fill="none" stroke="#fe0000" strokeWidth="10.5" strokeLinejoin="round">
      <rect x="784.6" y="734.7" width="57.5" height="1005.7" />
      <rect x="945.2" y="723.8" width="68.5" height="1007.5" />
    </Marks>
  </Page>
);

export default App;
